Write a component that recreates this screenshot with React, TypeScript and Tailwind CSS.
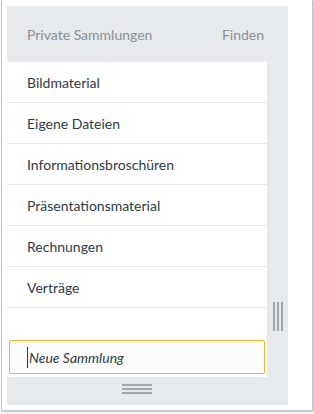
const ITEMS = [
  "Bildmaterial",
  "Eigene Dateien",
  "Informationsbroschüren",
  "Präsentationsmaterial",
  "Rechnungen",
  "Verträge",
];

export default function App() {
  return (
    <div
      className="w-[314px] h-[414px] bg-white"
      style={{ fontFamily: "Lato, 'Noto Sans', sans-serif" }}
    >
      <div className="ml-[1px] w-[312px] h-[411px] border-l border-r border-b border-[#c4c4c4] shadow-[1px_1px_2px_rgba(0,0,0,0.25)] pl-[5px] pt-[6px]">
        <div className="w-[281px] h-[399px] bg-[#e7eaed] flex flex-col">
          <div className="h-[56px] flex items-center justify-between pl-[20px] pr-[24px] text-[14px] text-[#8b8f93]">
            <span>Private Sammlungen</span>
            <span>Finden</span>
          </div>
          <div className="flex flex-1">
            <div className="w-[260px] flex flex-col">
              <div className="bg-white h-[315px] flex flex-col">
                {ITEMS.map((item) => (
                  <div
                    key={item}
                    className="h-[41px] border-b border-[#e8e8e8] flex items-center pl-[20px] text-[14px] text-[#2d3b45]"
                  >
                    {item}
                  </div>
                ))}
                <div className="flex-1 flex items-end px-[2px] pb-[3px]">
                  <div className="w-full h-[34px] border border-[#f2b52a] rounded-[2px] bg-[#fcfcfc] flex items-center pl-[17px]">
                    <span className="w-[1px] h-[21px] bg-[#2d3b45] mr-[1px]" />
                    <span className="italic text-[14px] text-[#2d3b45]">Neue Sammlung</span>
                  </div>
                </div>
              </div>
              <div className="flex-1 flex justify-center pt-[7px]">
                <div className="w-[30px] flex flex-col gap-[2px]">
                  <div className="h-[2px] bg-[#a3a6a9]" />
                  <div className="h-[2px] bg-[#a3a6a9]" />
                  <div className="h-[2px] bg-[#a3a6a9]" />
                </div>
              </div>
            </div>
            <div className="flex-1 flex justify-center pt-[240px]">
              <div className="h-[29px] flex gap-[2px]">
                <div className="w-[2px] bg-[#a3a6a9]" />
                <div className="w-[2px] bg-[#a3a6a9]" />
                <div className="w-[2px] bg-[#a3a6a9]" />
              </div>
            </div>
          </div>
        </div>
      </div>
    </div>
  );
}
